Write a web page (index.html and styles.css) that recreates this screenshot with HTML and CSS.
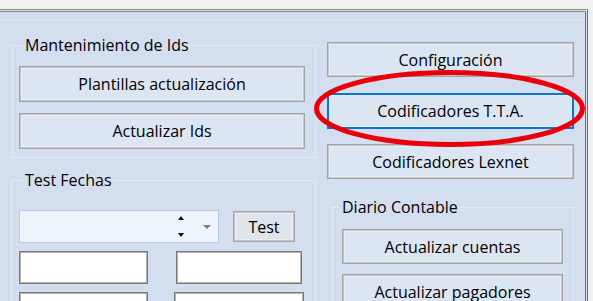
FILE: index.html
```html
<!DOCTYPE html>
<html>
<head>
    <meta charset="utf-8">
    <title>Mantenimiento</title>
    <link rel="stylesheet" href="styles.css">
</head>
<body>
    <div class="window">
        <div class="pane">
            <div class="cols">

                <div class="left">
                    <fieldset class="group group-ids">
                        <legend>Mantenimiento de Ids</legend>
                        <button class="btn btn-wide">Plantillas actualización</button>
                        <button class="btn btn-wide">Actualizar Ids</button>
                    </fieldset>

                    <fieldset class="group group-fechas">
                        <legend>Test Fechas</legend>
                        <div class="date-row">
                            <div class="datepicker">
                                <span class="spin">
                                    <span class="tri-up"></span>
                                    <span class="tri-down"></span>
                                </span>
                                <span class="drop"></span>
                            </div>
                            <button class="btn btn-test">Test</button>
                        </div>
                        <div class="input-row">
                            <input class="textbox" type="text">
                            <input class="textbox textbox-b" type="text">
                        </div>
                        <div class="input-row">
                            <input class="textbox" type="text">
                            <input class="textbox textbox-c" type="text">
                        </div>
                    </fieldset>
                </div>

                <div class="right">
                    <button class="btn btn-side">Configuración</button>
                    <button class="btn btn-side focused">Codificadores T.T.A.</button>
                    <button class="btn btn-side">Codificadores Lexnet</button>

                    <fieldset class="group group-diario">
                        <legend>Diario Contable</legend>
                        <button class="btn btn-diario">Actualizar cuentas</button>
                        <button class="btn btn-diario">Actualizar pagadores</button>
                    </fieldset>
                </div>

            </div>
        </div>
    </div>

    <!-- red highlight drawn over the screenshot -->
    <svg class="mark" width="593" height="301" viewBox="0 0 593 301">
        <ellipse cx="449.5" cy="108.5" rx="133" ry="36" fill="none" stroke="#e8000b" stroke-width="5"/>
    </svg>
</body>
</html>
```

FILE: styles.css
```css
*, *::before, *::after {
    box-sizing: border-box;
}

body {
    margin: 0;
    width: 593px;
    height: 301px;
    overflow: hidden;
    position: relative;
    background: #f0f0f0;
    font-family: "Open Sans", sans-serif;
    font-size: 16px;
    color: #000;
}

.window {
    margin-top: 9px;
    width: 588px;
    height: 292px;
    overflow: hidden;
    background: #d3dfef;
    border-top: 3px double #8c8c8c;
    border-right: 3px double #6e6e6e;
}

.pane {
    margin-top: 8px;
    border-top: 1px solid #e3e9f1;
}

.cols {
    display: flex;
    align-items: flex-start;
}

.left {
    flex: none;
    width: 327px;
    margin-top: 14px;
}

.right {
    flex: none;
    width: 250px;
    padding-top: 21px;
}

/* group boxes */
.group {
    margin: 0;
    border: 1px solid #e4eaf2;
    padding: 0 10px 8px 6px;
    min-width: 0;
}

.group legend {
    margin-left: 4px;
    padding: 0 2px;
    line-height: 20px;
}

.group-ids {
    margin-left: 12px;
    width: 304px;
}

.group-fechas {
    margin-top: 12px;
    margin-left: 11px;
    width: 305px;
    padding-left: 7px;
    padding-bottom: 20px;
}

.group-diario {
    margin-top: 18px;
    margin-left: 5px;
    width: 242px;
    padding-left: 9px;
}

.group-diario legend {
    margin-left: -2px;
}

/* buttons */
.btn {
    display: block;
    font-family: "Open Sans", sans-serif;
    font-size: 16px;
    color: #000;
    background: #dce6f3;
    border: 1px solid #a3a3a3;
    box-shadow: inset 0 0 0 1px #c6c6c6, inset 0 0 0 2px #e9eef4;
    padding: 0;
    margin: 0;
    line-height: 20px;
}

.btn-wide {
    width: 286px;
    height: 36px;
    margin-top: 11px;
}

.btn-wide + .btn-wide {
    margin-top: 11px;
}

.btn-side {
    width: 247px;
    height: 35px;
    margin-bottom: 16px;
}

.btn-side.focused {
    border: 2px solid #0a74d6;
    box-shadow: inset 0 0 0 1px #e6edf6;
    height: 36px;
    margin-bottom: 15px;
}

.btn-diario {
    width: 221px;
    height: 35px;
    margin-top: 12px;
}

.btn-diario + .btn-diario {
    margin-top: 10px;
}

.btn-test {
    width: 62px;
    height: 31px;
    margin-left: 14px;
    background: #dfe5ed;
}

/* date picker */
.date-row {
    display: flex;
    align-items: center;
    margin-top: 20px;
}

.datepicker {
    width: 200px;
    height: 33px;
    background: #edf3fb;
    border: 1px solid #b7cbe3;
    display: flex;
    align-items: center;
    justify-content: flex-end;
    padding-right: 7px;
}

.spin {
    display: flex;
    flex-direction: column;
    justify-content: space-between;
    height: 21px;
    margin-right: 19px;
}

.tri-up,
.tri-down {
    width: 0;
    height: 0;
    border-left: 3px solid transparent;
    border-right: 3px solid transparent;
}

.tri-up {
    border-bottom: 4px solid #111;
}

.tri-down {
    border-top: 4px solid #111;
}

.drop {
    width: 0;
    height: 0;
    border-left: 4px solid transparent;
    border-right: 4px solid transparent;
    border-top: 4px solid #7a7a7a;
}

/* text boxes */
.input-row {
    display: flex;
    margin-top: 8px;
}

.textbox {
    width: 129px;
    height: 33px;
    margin: 0;
    padding: 0;
    background: #fff;
    border: 1px solid #777;
    box-shadow: inset 0 0 0 1px #b4b4b4;
}

.textbox-b {
    margin-left: 28px;
    width: 126px;
}

.textbox-c {
    margin-left: 26px;
    width: 130px;
}

.mark {
    position: absolute;
    top: 0;
    left: 0;
    pointer-events: none;
}
```
